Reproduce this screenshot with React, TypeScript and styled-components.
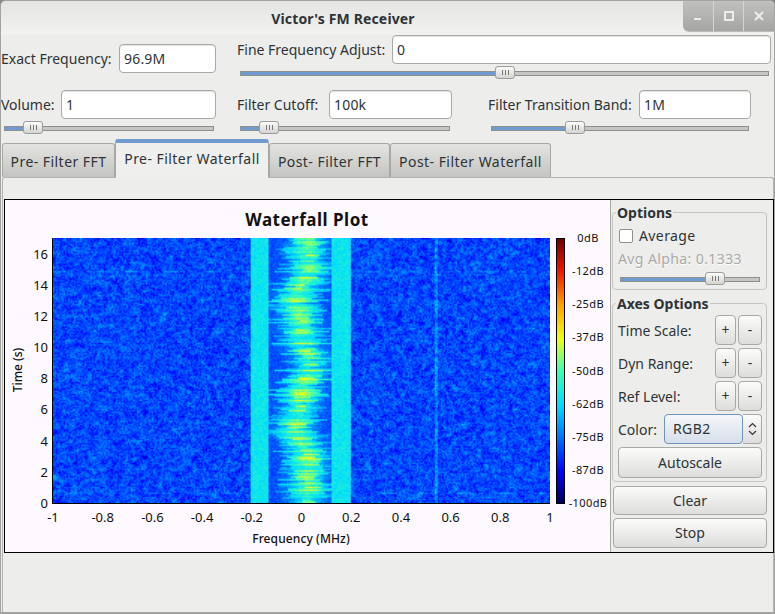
import * as React from 'react'
import styled, { createGlobalStyle } from 'styled-components'

const FONT = '"Noto Sans", "Open Sans", sans-serif'

const GlobalStyle = createGlobalStyle`
  html, body {
    margin: 0;
    padding: 0;
    background: #8a8a86;
  }
  body {
    font-family: ${FONT};
    font-size: 14px;
    color: #2e3436;
  }
`

const Win = styled.div`
  width: 775px;
  height: 614px;
  box-sizing: border-box;
  border: 1px solid #a3a39f;
  border-bottom-width: 2px;
  border-radius: 6px 6px 0 0;
  background: #ededeb;
  display: flex;
  flex-direction: column;
  overflow: hidden;
`
const TitleBar = styled.div`
  position: relative;
  height: 34px;
  flex: none;
  box-sizing: border-box;
  padding-right: 89px;
  text-align: center;
  font-weight: 700;
  line-height: 35px;
  letter-spacing: 0.15px;
  color: #2e3436;
  background: linear-gradient(#e4e4e2, #f2f2f0);
`
const WinButtons = styled.div`
  position: absolute;
  right: 0;
  top: 0;
  height: 30px;
  width: 91px;
  display: flex;
  border-radius: 0 0 0 6px;
  background: linear-gradient(#c0c0be, #a5a5a3);
  border-bottom: 1px solid #bdbdbb;
`
const WinButton = styled.div`
  flex: 1;
  display: flex;
  align-items: center;
  justify-content: center;
  border-left: 1px solid #d6d6d4;
  &:first-child {
    border-left: none;
  }
`
const Controls = styled.div`
  flex: none;
  height: 104px;
  display: grid;
  grid-template-columns: 236px 1fr;
  grid-template-rows: 55px 49px;
`
const LeftCell = styled.div`
  display: flex;
  flex-direction: column;
  padding-top: 9px;
`
const FieldRow = styled.div`
  display: flex;
  align-items: center;
  justify-content: space-between;
  height: 29px;
`
const Label = styled.span`
  white-space: nowrap;
  font-size: 14px;
  line-height: 20px;
`
const SpacedLabel = styled(Label)`
  letter-spacing: 0.4px;
`
const Input = styled.div<{ $width: number }>`
  box-sizing: border-box;
  width: ${p => p.$width}px;
  flex: none;
  height: 29px;
  border: 1px solid #a9a9a5;
  border-radius: 4px;
  background: #fff;
  padding-left: 4px;
  font-size: 14px;
  line-height: 27px;
  letter-spacing: 0.2px;
  color: #2e3436;
  box-shadow: inset 0 1px 1px #e2e2e2;
`
const SliderTrack = styled.div<{ $width: number }>`
  position: relative;
  width: ${p => p.$width}px;
  height: 5px;
  box-sizing: border-box;
  border: 1px solid #8f8f8b;
  background: #c6c6c2;
`
const SliderFill = styled.div`
  height: 100%;
  background: #6f9bd0;
`
const SliderThumb = styled.div`
  position: absolute;
  top: -6px;
  width: 20px;
  height: 13px;
  box-sizing: border-box;
  border: 1px solid #9c9c98;
  border-radius: 3px;
  background: linear-gradient(#fbfbfa, #d4d4d1);
  display: flex;
  align-items: center;
  justify-content: center;
  gap: 2px;
  & > i {
    width: 1px;
    height: 5px;
    background: #777;
  }
`
const SliderWrap = styled.div<{ $left: number; $top: number }>`
  margin: ${p => p.$top}px 0 0 ${p => p.$left}px;
`
const Column = styled.div<{ $width?: number }>`
  display: flex;
  flex-direction: column;
  ${p => (p.$width ? `width: ${p.$width}px;` : '')}
`
const RightBottom = styled.div`
  display: flex;
  gap: 36px;
`
const TabBar = styled.div`
  flex: none;
  height: 38px;
  padding-left: 1px;
  display: flex;
  align-items: flex-end;
  position: relative;
  z-index: 1;
`
const Tab = styled.div<{ $active?: boolean; $width: number }>`
  box-sizing: border-box;
  width: ${p => p.$width}px;
  height: ${p => (p.$active ? 39 : 34)}px;
  margin-bottom: ${p => (p.$active ? -1 : 0)}px;
  text-align: center;
  line-height: ${p => (p.$active ? 32 : 35)}px;
  font-size: 14px;
  letter-spacing: 0.45px;
  white-space: nowrap;
  border: 1px solid #a8a8a4;
  border-bottom: none;
  border-radius: 3px 3px 0 0;
  background: ${p =>
    p.$active ? '#efefed' : 'linear-gradient(#e3e3e1, #c4c4c1)'};
  ${p => (p.$active ? 'border-top: 4px solid #6f9bd0;' : '')}
`
const Pane = styled.div`
  flex: 1;
  margin: 0 0 0 1px;
  box-sizing: border-box;
  border: 1px solid #b3b3af;
  border-bottom: none;
  border-radius: 3px 3px 0 0;
  padding: 21px 0 0 1px;
  background: #ededeb;
`
const PlotFrame = styled.div`
  width: 770px;
  height: 354px;
  box-sizing: border-box;
  border: 1px solid #000;
  display: flex;
`
const PlotPanel = styled.div`
  position: relative;
  width: 605px;
  height: 352px;
  background: #fdf9ff;
  flex: none;
`
const PlotSvg = styled.svg`
  display: block;
  font-family: ${FONT};
`
const Heat = styled.canvas`
  position: absolute;
  left: 48px;
  top: 38px;
  width: 497px;
  height: 265px;
`
const Side = styled.div`
  flex: 1;
  box-sizing: border-box;
  border-left: 1px solid #a8a8a4;
  background: #ededeb;
  padding: 5px 0 0 1px;
  display: flex;
  flex-direction: column;
`
const Group = styled.div<{ $height: number }>`
  position: relative;
  flex: none;
  box-sizing: border-box;
  width: 155px;
  height: ${p => p.$height}px;
  border: 1px solid #c5c5c1;
  border-radius: 4px;
  padding: 0 4px 0 5px;
`
const GroupTitle = styled.div`
  position: absolute;
  top: -9px;
  left: 3px;
  padding: 0 1px;
  background: #ededeb;
  font-weight: 700;
  font-size: 14px;
  line-height: 17px;
  color: #2e3436;
`
const CheckRow = styled.div`
  display: flex;
  align-items: center;
  gap: 6px;
  height: 20px;
  margin-top: 13px;
  margin-left: 1px;
`
const CheckBox = styled.div`
  width: 12px;
  height: 12px;
  border: 1px solid #8f8f8b;
  border-radius: 2px;
  background: #fff;
`
const Disabled = styled.div`
  color: #a8a8a6;
  line-height: 20px;
  margin-top: 3px;
  letter-spacing: 0.4px;
  text-shadow: 0 1px 0 #fff;
`
const AxisRow = styled.div`
  display: flex;
  align-items: center;
  height: 30px;
  margin-bottom: 3px;
`
const AxisLabel = styled.span`
  flex: 1;
  padding-top: 1px;
  font-size: 14px;
  white-space: nowrap;
`
const Button = styled.div<{ $width?: number; $height?: number; $gap?: number }>`
  box-sizing: border-box;
  flex: none;
  width: ${p => (p.$width ? `${p.$width}px` : 'auto')};
  height: ${p => p.$height ?? 30}px;
  margin-left: ${p => p.$gap ?? 0}px;
  border: 1px solid #a8a8a4;
  border-radius: 4px;
  background: linear-gradient(#fbfbfa, #dddddb);
  text-align: center;
  font-size: 14px;
  line-height: ${p => (p.$height ?? 30) - 2}px;
  color: #2e3436;
`
const ComboMain = styled.div`
  box-sizing: border-box;
  flex: none;
  width: 79px;
  height: 30px;
  border: 1px solid #6f94c0;
  border-radius: 4px;
  background: linear-gradient(#f4f6f9, #d6dfeb);
  padding-left: 8px;
  line-height: 28px;
  letter-spacing: 0.4px;
`
const ComboArrow = styled(Button)`
  margin-left: 0;
  border-left: none;
  border-radius: 0 4px 4px 0;
  display: flex;
  align-items: center;
  justify-content: center;
`
const Spacer = styled.div<{ $height: number }>`
  flex: none;
  height: ${p => p.$height}px;
`

const Slider: React.FC<{ width: number; thumb: number }> = ({ width, thumb }) => (
  <SliderTrack $width={width}>
    <SliderFill style={{ width: thumb + 4 }} />
    <SliderThumb style={{ left: thumb - 1 }}>
      <i />
      <i />
      <i />
    </SliderThumb>
  </SliderTrack>
)

// colormap stops, same order as the colour bar (bottom to top)
const STOPS: [number, number, number, number][] = [
  [0, 0, 0, 90],
  [0.12, 0, 0, 255],
  [0.37, 0, 220, 255],
  [0.5, 60, 255, 180],
  [0.62, 240, 255, 20],
  [0.75, 255, 160, 0],
  [0.88, 240, 20, 0],
  [1, 110, 0, 0]
]

function colour(v: number): [number, number, number] {
  const t = Math.max(0, Math.min(1, v))
  for (let i = 1; i < STOPS.length; i++) {
    const a = STOPS[i - 1]
    const b = STOPS[i]
    if (t <= b[0]) {
      const k = (t - a[0]) / (b[0] - a[0])
      return [a[1] + (b[1] - a[1]) * k, a[2] + (b[2] - a[2]) * k, a[3] + (b[3] - a[3]) * k]
    }
  }
  return [110, 0, 0]
}

function makeRandom(seed: number) {
  let s = seed
  return () => {
    s = (s * 1664525 + 1013904223) % 4294967296
    return s / 4294967296
  }
}

const W = 497
const H = 265

function paintWaterfall(canvas: HTMLCanvasElement) {
  const ctx = canvas.getContext('2d')
  if (!ctx) return
  const rnd = makeRandom(1234)
  const cols = Math.ceil(W / 1.5)
  const rows = Math.ceil(H / 1.5)
  const field = new Float32Array(cols * rows)
  const rowLift: number[] = []
  const rowReach: number[] = []
  const rowGain: number[] = []
  const rowShift: number[] = []
  for (let r = 0; r < rows; r++) {
    const time = (1 - r / rows) * 17
    // the faint dashed lines near 15 s and 0.7 s
    const marked = Math.abs(time - 14.9) < 0.05 || Math.abs(time - 0.7) < 0.05
    rowLift.push(marked ? 0.05 : rnd() < 0.04 ? 0.02 : 0)
    rowReach.push(0.02 + rnd() * 0.105)
    rowGain.push(rnd())
    rowShift.push((rnd() - 0.5) * 0.06)
  }
  const blobs = new Float32Array(cols * rows)
  for (let i = 0; i < blobs.length; i++) blobs[i] = rnd()
  const blob = (c: number, r: number) => {
    let sum = 0
    for (let dy = -1; dy <= 1; dy++) {
      for (let dx = -1; dx <= 1; dx++) {
        const cc = Math.min(cols - 1, Math.max(0, c + dx))
        const rr = Math.min(rows - 1, Math.max(0, r + dy))
        sum += blobs[rr * cols + cc]
      }
    }
    return sum / 9 - 0.5
  }
  for (let r = 0; r < rows; r++) {
    const time = 1 - r / rows
    const wander = 0.024 * Math.sin(time * 15) + 0.01 * Math.sin(time * 37 + 1)
    for (let c = 0; c < cols; c++) {
      const f = (c / cols) * 2 - 1
      const dash = Math.sin(f * 40 + r) > 0 ? rowLift[r] : 0
      let v = 0.14 + rnd() * 0.12 + blob(c, r) * 0.22 + dash
      if (f > -0.207 && f < -0.135) v = 0.36 + rnd() * 0.08
      else if (f > 0.119 && f < 0.195) v = 0.36 + rnd() * 0.08
      else if (f >= -0.135 && f <= 0.119) {
        const d = Math.abs(f - wander - 0.005)
        const streakD = Math.abs(f - wander - rowShift[r])
        const core = Math.exp(-(d * d) / (2 * 0.05 * 0.05))
        const streak = streakD < rowReach[r] ? 0.07 + rowGain[r] * 0.08 : 0
        v = 0.17 + rnd() * 0.07 + streak + core * (0.12 + rowGain[r] * 0.14)
      } else if (Math.abs(f - 0.538) < 0.006) {
        v += 0.08
      }
      field[r * cols + c] = v
    }
  }
  canvas.width = cols
  canvas.height = rows
  const img = ctx.createImageData(cols, rows)
  for (let i = 0; i < field.length; i++) {
    const [cr, cg, cb] = colour(field[i])
    img.data[i * 4] = cr
    img.data[i * 4 + 1] = cg
    img.data[i * 4 + 2] = cb
    img.data[i * 4 + 3] = 255
  }
  ctx.putImageData(img, 0, 0)
}

const Waterfall: React.FC = () => {
  const ref = React.useRef<HTMLCanvasElement>(null)
  React.useEffect(() => {
    if (ref.current) paintWaterfall(ref.current)
  }, [])
  return <Heat ref={ref} />
}

const xTicks = ['-1', '-0.8', '-0.6', '-0.4', '-0.2', '0', '0.2', '0.4', '0.6', '0.8', '1']
const yTicks = [0, 2, 4, 6, 8, 10, 12, 14, 16]
const dbTicks = ['0dB', '-12dB', '-25dB', '-37dB', '-50dB', '-62dB', '-75dB', '-87dB', '-100dB']

const Plot: React.FC = () => (
  <PlotPanel>
    <PlotSvg width={605} height={352}>
      <defs>
        <linearGradient id="bar" x1="0" y1="1" x2="0" y2="0">
          {STOPS.map(s => (
            <stop
              key={s[0]}
              offset={s[0]}
              stopColor={`rgb(${s[1]},${s[2]},${s[3]})`}
            />
          ))}
        </linearGradient>
      </defs>
      <text x={302} y={26} textAnchor="middle" fontSize={17} fontWeight={700} letterSpacing={0.5} fill="#111">
        Waterfall Plot
      </text>
      {xTicks.map((t, i) => (
        <text key={t} x={48 + i * 49.7} y={322} textAnchor="middle" fontSize={13} fill="#111">
          {t}
        </text>
      ))}
      {yTicks.map(t => (
        <text key={t} x={43} y={303 - (t / 17) * 265 + 5} textAnchor="end" fontSize={13} fill="#111">
          {t}
        </text>
      ))}
      <text
        transform="translate(17,170) rotate(-90)"
        textAnchor="middle"
        fontSize={12}
        fontWeight={500}
        fill="#111"
      >
        Time (s)
      </text>
      <text x={296} y={343} textAnchor="middle" fontSize={12} fontWeight={500} letterSpacing={0.1} fill="#111">
        Frequency (MHz)
      </text>
      <rect x={47} y={38} width={498} height={266} fill="#000" />
      <rect x={551.5} y={38.5} width={8} height={265} fill="url(#bar)" stroke="#000" strokeWidth={1} />
      {dbTicks.map((t, i) => (
        <text key={t} x={583} y={42 + (i * 265) / 8} textAnchor="middle" fontSize={11} letterSpacing={0.4} fill="#111">
          {t}
        </text>
      ))}
    </PlotSvg>
    <Waterfall />
  </PlotPanel>
)

const AxisControl: React.FC<{ label: string }> = ({ label }) => (
  <AxisRow>
    <AxisLabel>{label}</AxisLabel>
    <Button $width={21}>+</Button>
    <Button $width={24} $gap={2}>-</Button>
  </AxisRow>
)

export default function App() {
  return (
    <>
      <GlobalStyle />
      <Win>
        <TitleBar>
          Victor's FM Receiver
          <WinButtons>
            <WinButton>
              <svg width="12" height="12" viewBox="0 0 12 12">
                <rect x="2" y="8" width="7" height="2" fill="#ececec" />
              </svg>
            </WinButton>
            <WinButton>
              <svg width="12" height="12" viewBox="0 0 12 12">
                <rect x="2" y="2" width="8" height="8" fill="none" stroke="#ececec" strokeWidth="2" />
              </svg>
            </WinButton>
            <WinButton>
              <svg width="12" height="12" viewBox="0 0 12 12">
                <path d="M2 2 L10 10 M10 2 L2 10" stroke="#ececec" strokeWidth="2.2" />
              </svg>
            </WinButton>
          </WinButtons>
        </TitleBar>
        <Controls>
          <LeftCell>
            <Column $width={215}>
              <FieldRow>
                <Label>Exact Frequency:</Label>
                <Input $width={97}>96.9M</Input>
              </FieldRow>
            </Column>
          </LeftCell>
          <Column $width={534}>
            <FieldRow>
              <Label>Fine Frequency Adjust:</Label>
              <Input $width={379}>0</Input>
            </FieldRow>
            <SliderWrap $left={3} $top={7}>
              <Slider width={529} thumb={255} />
            </SliderWrap>
          </Column>
          <Column $width={215}>
            <FieldRow>
              <Label>Volume:</Label>
              <Input $width={155}>1</Input>
            </FieldRow>
            <SliderWrap $left={3} $top={7}>
              <Slider width={210} thumb={19} />
            </SliderWrap>
          </Column>
          <RightBottom>
            <Column $width={215}>
              <FieldRow>
                <Label>Filter Cutoff:</Label>
                <Input $width={123}>100k</Input>
              </FieldRow>
              <SliderWrap $left={3} $top={7}>
                <Slider width={210} thumb={19} />
              </SliderWrap>
            </Column>
            <Column $width={263}>
              <FieldRow>
                <Label>Filter Transition Band:</Label>
                <Input $width={112}>1M</Input>
              </FieldRow>
              <SliderWrap $left={3} $top={7}>
                <Slider width={258} thumb={74} />
              </SliderWrap>
            </Column>
          </RightBottom>
        </Controls>
        <TabBar>
          <Tab $width={113}>Pre- Filter FFT</Tab>
          <Tab $active $width={154}>Pre- Filter Waterfall</Tab>
          <Tab $width={121}>Post- Filter FFT</Tab>
          <Tab $width={161}>Post- Filter Waterfall</Tab>
        </TabBar>
        <Pane>
          <PlotFrame>
            <Plot />
            <Side>
              <Spacer $height={7} />
              <Group $height={78}>
                <GroupTitle>Options</GroupTitle>
                <CheckRow>
                  <CheckBox />
                  <SpacedLabel>Average</SpacedLabel>
                </CheckRow>
                <Disabled>Avg Alpha: 0.1333</Disabled>
                <SliderWrap $left={2} $top={8}>
                  <Slider width={140} thumb={85} />
                </SliderWrap>
              </Group>
              <Spacer $height={13} />
              <Group $height={179}>
                <GroupTitle>Axes Options</GroupTitle>
                <Spacer $height={11} />
                <AxisControl label="Time Scale:" />
                <AxisControl label="Dyn Range:" />
                <AxisControl label="Ref Level:" />
                <AxisRow>
                  <AxisLabel>Color:</AxisLabel>
                  <ComboMain>RGB2</ComboMain>
                  <ComboArrow $width={19}>
                    <svg width="9" height="14" viewBox="0 0 9 14">
                      <path d="M1 5 L4.5 1.5 L8 5 M1 9 L4.5 12.5 L8 9" fill="none" stroke="#2e3436" strokeWidth="1.2" />
                    </svg>
                  </ComboArrow>
                </AxisRow>
                <Button $height={31}>Autoscale</Button>
              </Group>
              <Spacer $height={4} />
              <Button $width={154} $height={29} $gap={1}>Clear</Button>
              <Spacer $height={3} />
              <Button $width={154} $gap={1}>Stop</Button>
            </Side>
          </PlotFrame>
        </Pane>
      </Win>
    </>
  )
}
